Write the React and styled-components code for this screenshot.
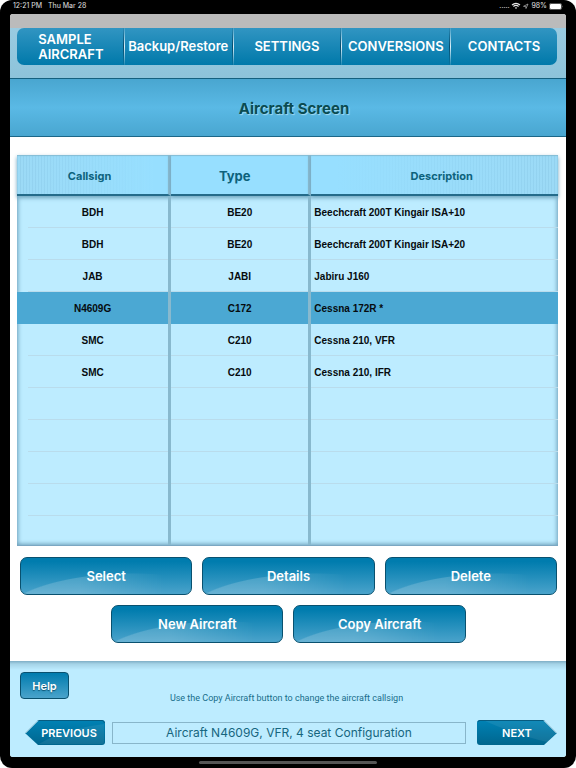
import React from "react";
import styled, { createGlobalStyle, css } from "styled-components";

const GlobalStyle = createGlobalStyle`
  *, *::before, *::after { box-sizing: border-box; }
  body { margin: 0; background: #fff; font-family: Inter, "Liberation Sans", sans-serif; }
  button { font-family: inherit; cursor: pointer; }
`;

const Device = styled.div`
  min-height: 100vh;
  display: flex;
  flex-direction: column;
  padding: 0 10px;
  background: #000;
  border-radius: 12px;
`;

const StatusBar = styled.header`
  height: 14px;
  flex: none;
  display: flex;
  justify-content: space-between;
  align-items: center;
  padding: 0 2px 2px 3px;
  color: #e0e0e0;
  font-size: 7px;
  line-height: 12px;
`;

const StatusGroup = styled.div`
  display: flex;
  align-items: center;
  gap: ${(p) => p.$gap}px;
`;

const Screen = styled.div`
  flex: 1;
  display: flex;
  flex-direction: column;
  background: #fff;
  border-radius: 3px;
  overflow: hidden;
`;

const GreyStrip = styled.div`
  height: 14px;
  flex: none;
  background: #bbb;
`;

const NavBar = styled.nav`
  flex: none;
  padding: 0 9px 13px 7px;
  background: linear-gradient(#9acbe1, #8dc3da);
  border-bottom: 1px solid #14607f;
`;

const NavList = styled.div`
  display: grid;
  grid-template-columns: 106fr 109fr 109fr 109fr 108fr;
  height: 37px;
  border-radius: 7px;
  overflow: hidden;
  background: linear-gradient(#3195c2, #0079aa);
`;

const NavButton = styled.button`
  display: flex;
  align-items: center;
  justify-content: center;
  padding: 0 0 0 2px;
  border: 0;
  background: none;
  color: #fff;
  font-size: 13px;
  font-weight: 600;
  line-height: 15px;
  text-align: left;
  white-space: pre-line;

  & + & {
    background:
      linear-gradient(rgba(255, 255, 255, 0.1), rgba(240, 250, 255, 0.9) 50%, rgba(255, 255, 255, 0.1)) 1px 0 / 1px 100% no-repeat,
      linear-gradient(rgba(0, 60, 90, 0.1), rgba(0, 60, 90, 0.8) 50%, rgba(0, 60, 90, 0.1)) 0 0 / 1px 100% no-repeat;
  }
`;

const TitleBar = styled.div`
  height: 58px;
  flex: none;
  display: flex;
  align-items: center;
  justify-content: center;
  padding: 2px 0 0 12px;
  background: linear-gradient(#49a6d0, #5ab9e5 50%, #49a6d0);
  border-bottom: 1px solid #1c6788;
`;

const Title = styled.h1`
  margin: 0;
  color: #0a4c52;
  font-size: 15px;
  font-weight: 700;
  line-height: 20px;
  text-shadow: 1px 1px 1px rgba(200, 235, 250, 0.7);
`;

const Content = styled.main`
  flex: 1;
  padding: 18px 8px 18px 7px;
`;

const TableFrame = styled.div`
  background: #bdecff;
  box-shadow: inset 0 0 4px 1px #6b9db8;
  border-bottom: 1px solid #7ba7c2;
`;

const Table = styled.table`
  width: 100%;
  table-layout: fixed;
  border-collapse: separate;
  border-spacing: 0;
`;

const Col = styled.col`
  width: ${(p) => p.$width};
`;

const divider = css`
  border-right: 3px solid #88b9ce;
`;

const HeadCell = styled.th`
  height: 41px;
  padding: 2px ${(p) => p.$right || 0}px 0 ${(p) => p.$left || 0}px;
  color: #0d627c;
  font-size: ${(p) => (p.$large ? 13 : 11)}px;
  font-weight: 700;
  border-bottom: 2px solid #246b8a;
  box-shadow: inset 0 1px 1px #84bcd4, 0 2px 4px #6fa4be;
  background: ${(p) =>
    p.$stripes
      ? `linear-gradient(${p.$stripes}, rgba(151, 223, 255, 0), #97dfff 90%),
         repeating-linear-gradient(to right, #93d1ee 0 1px, #9cdaf6 1px 3px)`
      : "#97dfff"};
  ${(p) => !p.$last && divider}
`;

const Cell = styled.td`
  height: 32px;
  padding: ${(p) => (p.$last ? "0 3px" : "0")};
  color: #060b0e;
  font: bold 10px "Liberation Sans", Arial, sans-serif;
  text-align: ${(p) => (p.$last ? "left" : "center")};
  background: linear-gradient(#b9dcec, #b9dcec) ${(p) => (p.$first ? "11px" : "0")} 100% / 100% 1px no-repeat;
  ${(p) => !p.$last && divider}
`;

const Row = styled.tr`
  background: ${(p) => (p.$selected ? "#4ba8d3" : "none")};

  ${(p) => p.$selected && css`
    ${Cell} { background: none; }
  `}

  &:last-child ${Cell} {
    height: 29px;
    background: none;
  }
`;

const Actions = styled.div`
  display: grid;
  grid-template-columns: repeat(6, 1fr);
  gap: 10px;
  padding: 11px 1px 0 3px;
`;

const ActionButton = styled.button`
  position: relative;
  height: 38px;
  grid-column: ${(p) => (p.$offset ? "2 / span 2" : "span 2")};
  padding: 0;
  overflow: hidden;
  border: 1px solid #09516f;
  border-radius: 7px;
  background: linear-gradient(#007cae 10%, #4aa3cb);
  color: #fff;
  font-size: 13px;
  font-weight: 600;
  line-height: 16px;

  &::before {
    content: "";
    position: absolute;
    inset: 0;
    background: radial-gradient(134px 47px at 112px 62px, rgba(255, 255, 255, 0.17) 98%, transparent 100%);
    mask-image: linear-gradient(to right, #000 35%, transparent 85%);
  }
`;

const Label = styled.span`
  position: relative;
`;

const Footer = styled.footer`
  flex: none;
  display: flex;
  flex-direction: column;
  padding: 11px 9px 12px 10px;
  background: linear-gradient(#7faec5, #a5d3e7 3px, #bdecff 9px);
`;

const HelpButton = styled.button`
  align-self: flex-start;
  width: 49px;
  height: 27px;
  padding: 0;
  border: 1px solid #09516f;
  border-radius: 4px;
  background: linear-gradient(#007cae, #4aa3cb);
  color: #fff;
  font-size: 11px;
  font-weight: 600;
  text-shadow: 0 1px 1px #0b4f6e;
`;

const Hint = styled.p`
  margin: -7px 0 16px;
  padding-right: 4px;
  text-align: center;
  color: #176d8a;
  font-family: Roboto, sans-serif;
  font-size: 9px;
  line-height: 12px;
`;

const Pager = styled.div`
  display: flex;
  align-items: center;
  gap: 7px;
  padding-left: 5px;
`;

const ArrowButton = styled.button`
  position: relative;
  flex: none;
  width: 80px;
  height: 25px;
  padding: ${(p) => (p.$next ? "0" : "0 0 0 8px")};
  margin-left: ${(p) => (p.$next ? "4px" : "0")};
  border: 0;
  background: none;
  color: #fff;
  font-size: 11px;
  font-weight: 600;

  svg { position: absolute; inset: 0; }
`;

const Summary = styled.input`
  flex: 1;
  min-width: 0;
  height: 22px;
  padding: 0;
  border: 1px solid #88b6ca;
  border-radius: 0;
  background: transparent;
  color: #17667e;
  font: 12px Inter, sans-serif;
  text-align: center;
`;

const HomeArea = styled.div`
  height: 11px;
  flex: none;
  display: flex;
  justify-content: center;
  align-items: center;
`;

const HomeIndicator = styled.div`
  width: 32%;
  height: 3px;
  border-radius: 2px;
  background: #555;
`;

const navItems = ["SAMPLE\nAIRCRAFT", "Backup/Restore", "SETTINGS", "CONVERSIONS", "CONTACTS"];

const aircraft = [
  ["BDH", "BE20", "Beechcraft 200T Kingair ISA+10"],
  ["BDH", "BE20", "Beechcraft 200T Kingair ISA+20"],
  ["JAB", "JABI", "Jabiru J160"],
  ["N4609G", "C172", "Cessna 172R *"],
  ["SMC", "C210", "Cessna 210, VFR"],
  ["SMC", "C210", "Cessna 210, IFR"],
  ["", "", ""],
  ["", "", ""],
  ["", "", ""],
  ["", "", ""],
  ["", "", ""],
];

const selectedIndex = 3;

function StatusIcons() {
  return (
    <svg width="18" height="8" viewBox="0 0 18 8" fill="none" aria-hidden="true">
      <path d="M1 3 Q5 -.4 9 3 M2.4 4.5 Q5 2.4 7.6 4.5" stroke="#e8e8e8" strokeWidth="1.2" />
      <path d="M3.8 5.7 Q5 4.7 6.2 5.7 L5 7Z" fill="#e8e8e8" />
      <path d="M12.5 4.3 L17 2 L15 6.5 L14.7 4.5Z" stroke="#bbb" strokeWidth=".7" />
    </svg>
  );
}

function Battery() {
  return (
    <svg width="15" height="7" viewBox="0 0 15 7" aria-hidden="true">
      <rect x=".4" y=".4" width="12.2" height="6.2" rx="1.6" fill="none" stroke="#999" strokeWidth=".6" />
      <rect x="1" y="1" width="11" height="5" rx="1" fill="#fff" />
      <path d="M13.4 2.4 Q14.4 3.5 13.4 4.6Z" fill="#999" />
    </svg>
  );
}

function ArrowShape({ next }) {
  const id = next ? "next-fill" : "previous-fill";
  return (
    <svg width="80" height="25" viewBox="0 0 80 25" aria-hidden="true">
      <defs>
        <linearGradient id={id} x1="0" y1="0" x2="0" y2="1">
          <stop offset="0" stopColor="#0082b5" />
          <stop offset="1" stopColor="#00668e" />
        </linearGradient>
      </defs>
      {next ? (
        <>
          <path d="M3 0H67L80 13L67 25H3Q0 25 0 22V3Q0 0 3 0Z" fill={`url(#${id})`} />
          <path d="M8 1H67L79 13L70 22Q42 16 8 1Z" fill="#fff" opacity=".07" />
          <path d="M1 2Q1 .5 3 .5H67" fill="none" stroke="#075c80" />
          <path d="M67 .5L79.5 13" stroke="#f0faff" strokeWidth="1" />
        </>
      ) : (
        <>
          <path d="M13 0H77Q80 0 80 3V22Q80 25 77 25H13L0 13Z" fill={`url(#${id})`} />
          <path d="M14 24Q38 9 79 4V22Q79 24 77 24Z" fill="#fff" opacity=".07" />
          <path d="M13 .5H77Q79 .5 79.5 3" fill="none" stroke="#075c80" />
          <path d="M.5 13L13 .5" stroke="#f0faff" strokeWidth="1" />
        </>
      )}
    </svg>
  );
}

export default function App() {
  return (
    <Device>
      <GlobalStyle />
      <StatusBar>
        <StatusGroup $gap={6}>
          <span>12:21 PM</span>
          <span>Thu Mar 28</span>
        </StatusGroup>
        <StatusGroup $gap={2}>
          <span>.....</span>
          <StatusIcons />
          <span>98%</span>
          <Battery />
        </StatusGroup>
      </StatusBar>
      <Screen>
        <GreyStrip />
        <NavBar>
          <NavList>
            {navItems.map((item) => (
              <NavButton key={item} type="button">{item}</NavButton>
            ))}
          </NavList>
        </NavBar>
        <TitleBar>
          <Title>Aircraft Screen</Title>
        </TitleBar>
        <Content>
          <TableFrame>
            <Table>
              <colgroup>
                <Col $width="28.5%" />
                <Col $width="25.9%" />
                <Col />
              </colgroup>
              <thead>
                <tr>
                  <HeadCell scope="col" $right={6} $stripes="to right">Callsign</HeadCell>
                  <HeadCell scope="col" $right={10} $large>Type</HeadCell>
                  <HeadCell scope="col" $left={14} $stripes="to left" $last>Description</HeadCell>
                </tr>
              </thead>
              <tbody>
                {aircraft.map(([callsign, type, description], index) => (
                  <Row key={index} $selected={index === selectedIndex} aria-selected={index === selectedIndex}>
                    <Cell $first>{callsign}</Cell>
                    <Cell>{type}</Cell>
                    <Cell $last>{description}</Cell>
                  </Row>
                ))}
              </tbody>
            </Table>
          </TableFrame>
          <Actions>
            <ActionButton type="button"><Label>Select</Label></ActionButton>
            <ActionButton type="button"><Label>Details</Label></ActionButton>
            <ActionButton type="button"><Label>Delete</Label></ActionButton>
            <ActionButton type="button" $offset><Label>New Aircraft</Label></ActionButton>
            <ActionButton type="button"><Label>Copy Aircraft</Label></ActionButton>
          </Actions>
        </Content>
        <Footer>
          <HelpButton type="button">Help</HelpButton>
          <Hint>Use the Copy Aircraft button to change the aircraft callsign</Hint>
          <Pager>
            <ArrowButton type="button">
              <ArrowShape />
              <Label>PREVIOUS</Label>
            </ArrowButton>
            <Summary aria-label="Current aircraft" readOnly value="Aircraft N4609G, VFR, 4 seat Configuration" />
            <ArrowButton type="button" $next>
              <ArrowShape next />
              <Label>NEXT</Label>
            </ArrowButton>
          </Pager>
        </Footer>
      </Screen>
      <HomeArea>
        <HomeIndicator />
      </HomeArea>
    </Device>
  );
}
